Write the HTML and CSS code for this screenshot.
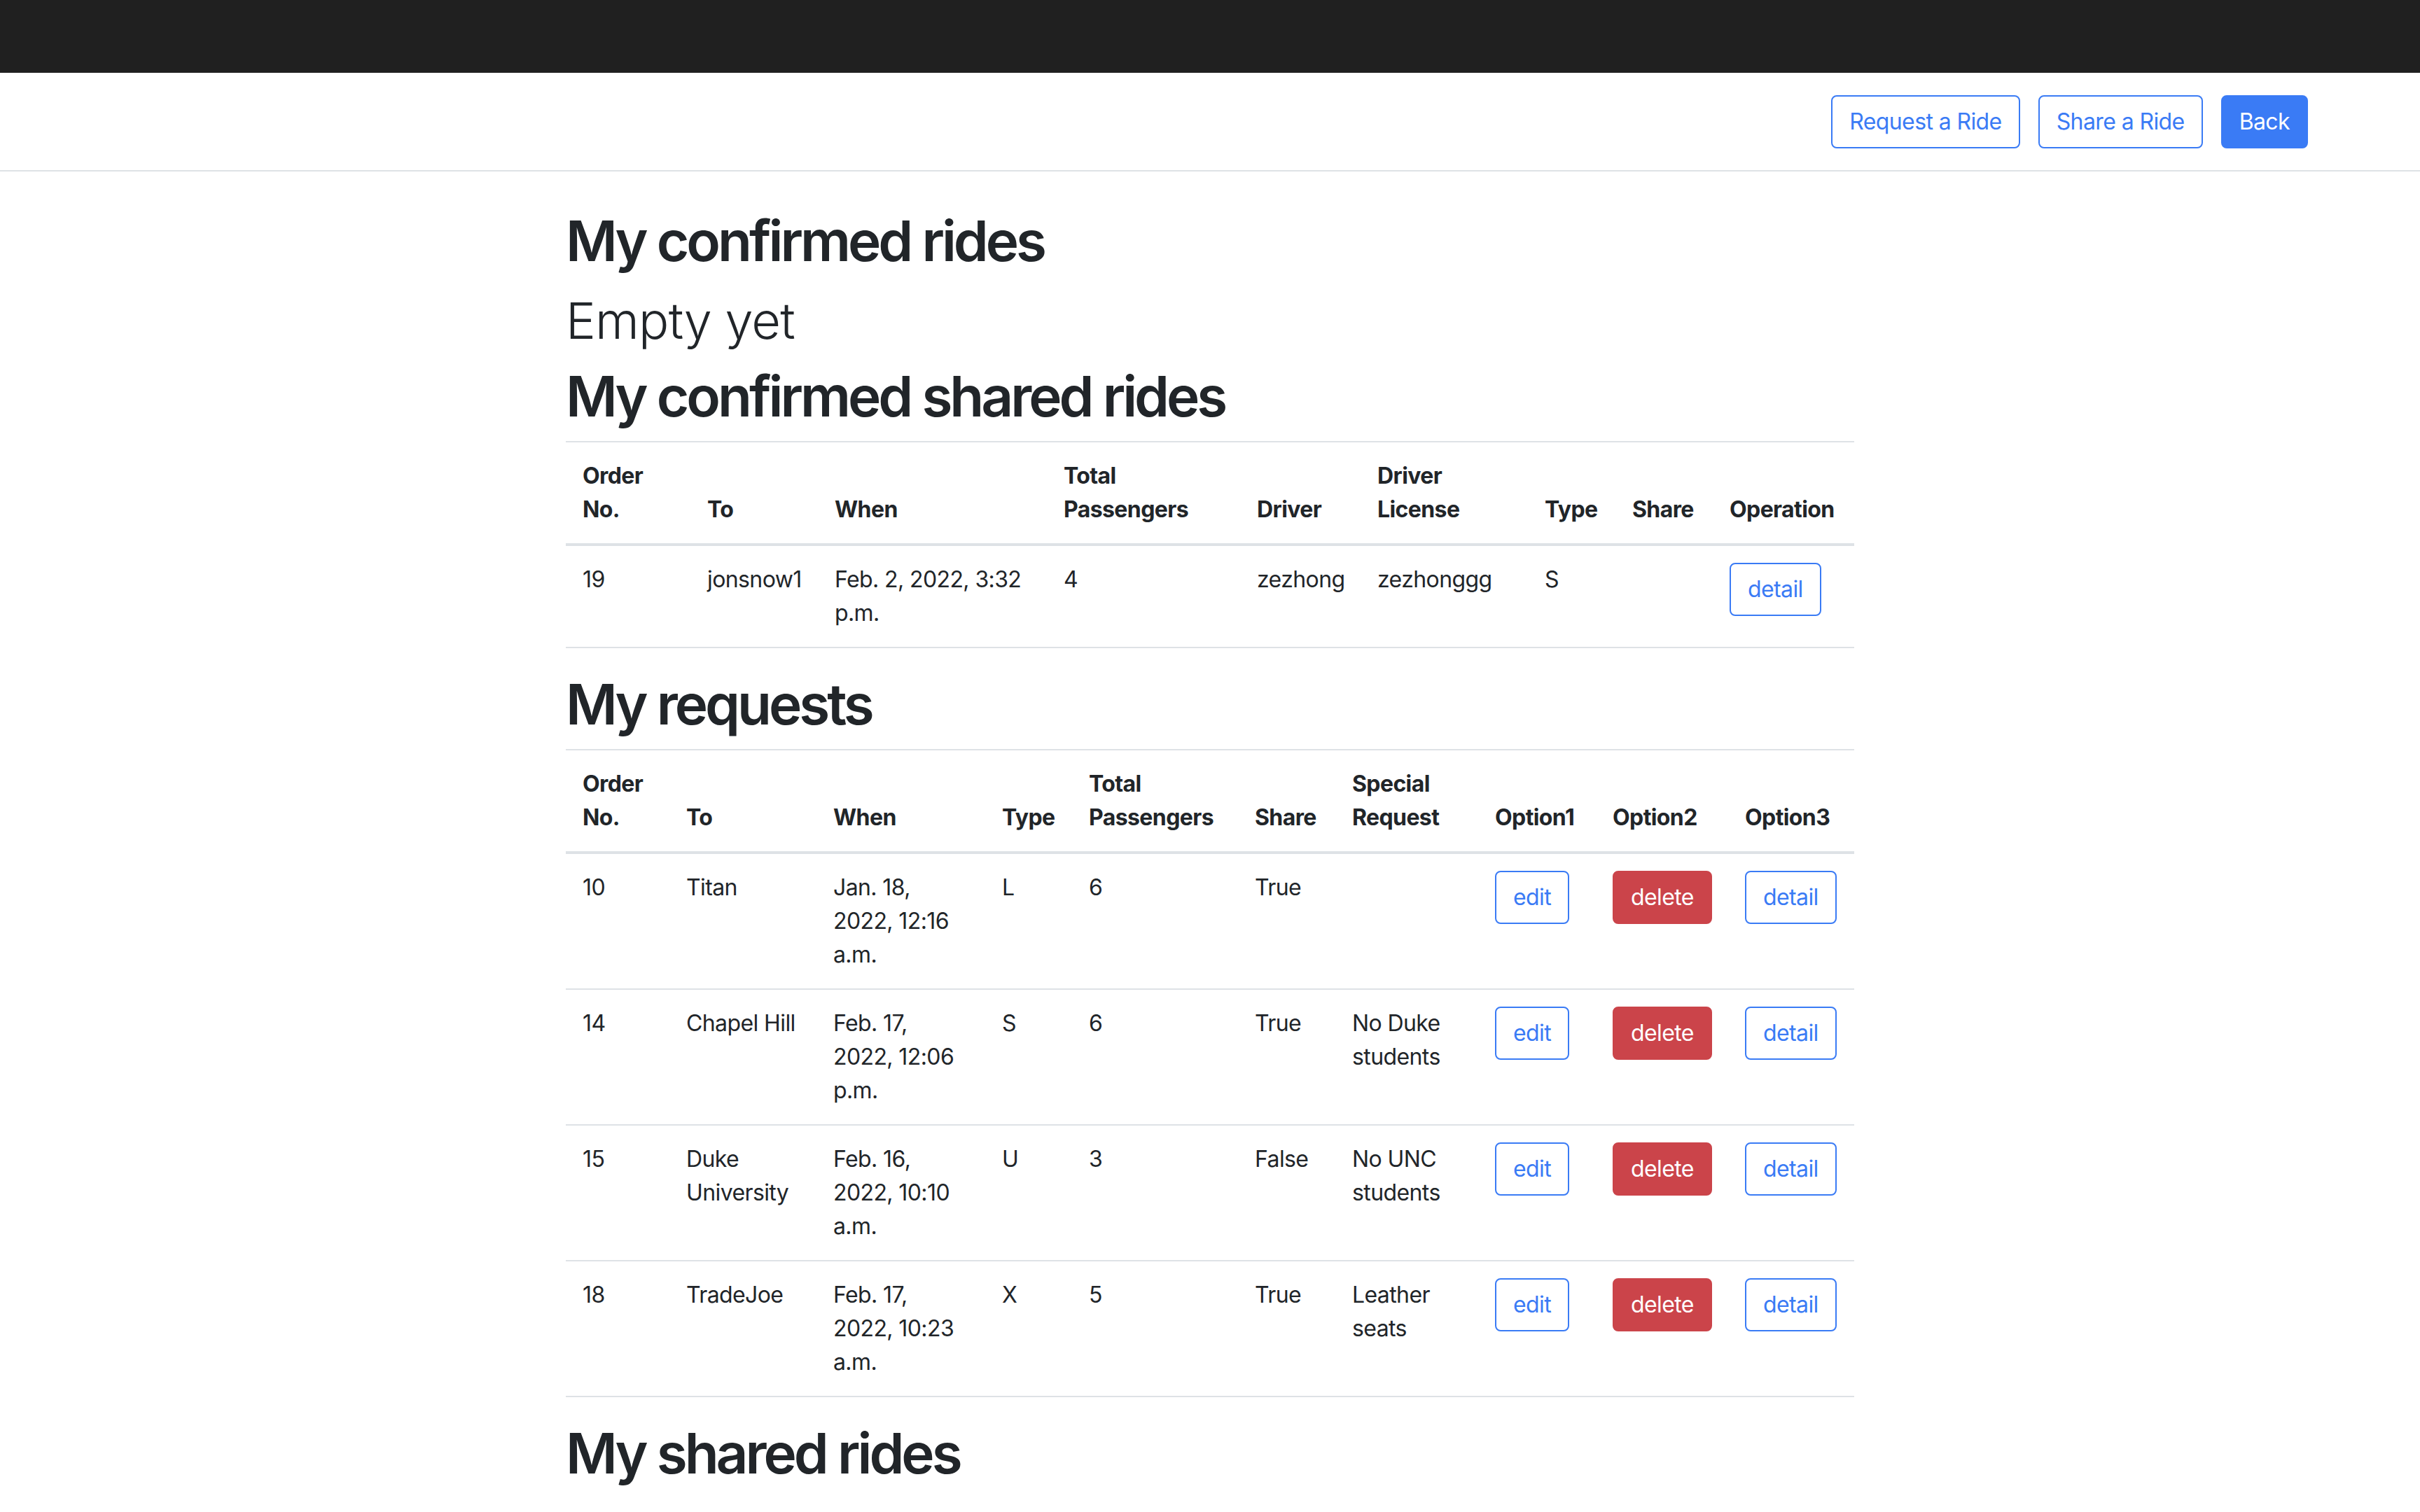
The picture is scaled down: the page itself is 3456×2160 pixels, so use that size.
FILE: index.html
```html
<!DOCTYPE html>
<html lang="en">
<head>
<meta charset="utf-8">
<title>My rides</title>
<link rel="stylesheet" href="styles.css">
</head>
<body>
<div class="topbar"></div>
<nav class="navbar">
  <div class="nav-actions">
    <a class="btn btn-outline" href="#">Request a Ride</a>
    <a class="btn btn-outline" href="#">Share a Ride</a>
    <a class="btn btn-primary" href="#">Back</a>
  </div>
</nav>
<main class="container">
  <h1 class="title">My confirmed rides</h1>
  <h2 class="empty">Empty yet</h2>
  <h1 class="title">My confirmed shared rides</h1>
  <table class="table">
    <colgroup>
      <col class="w178"><col class="w182"><col class="w327"><col class="w276"><col class="w172"><col class="w239"><col class="w125"><col class="w139"><col class="w202">
    </colgroup>
    <thead>
      <tr>
        <th>Order No.</th><th>To</th><th>When</th><th>Total Passengers</th><th>Driver</th><th>Driver License</th><th>Type</th><th>Share</th><th>Operation</th>
      </tr>
    </thead>
    <tbody>
      <tr>
        <td>19</td><td>jonsnow1</td><td>Feb. 2, 2022, 3:32 p.m.</td><td>4</td><td>zezhong</td><td>zezhonggg</td><td>S</td><td></td><td><a class="btn btn-outline" href="#">detail</a></td>
      </tr>
    </tbody>
  </table>
  <h1 class="title">My requests</h1>
  <table class="table">
    <colgroup>
      <col class="w148"><col class="w210"><col class="w241"><col class="w124"><col class="w237"><col class="w139"><col class="w204"><col class="w168"><col class="w189"><col class="w180">
    </colgroup>
    <thead>
      <tr>
        <th>Order No.</th><th>To</th><th>When</th><th>Type</th><th>Total Passengers</th><th>Share</th><th>Special Request</th><th>Option1</th><th>Option2</th><th>Option3</th>
      </tr>
    </thead>
    <tbody>
      <tr>
        <td>10</td><td>Titan</td><td>Jan. 18, 2022, 12:16 a.m.</td><td>L</td><td>6</td><td>True</td><td></td>
        <td><a class="btn btn-outline" href="#">edit</a></td><td><a class="btn btn-danger" href="#">delete</a></td><td><a class="btn btn-outline" href="#">detail</a></td>
      </tr>
      <tr>
        <td>14</td><td>Chapel Hill</td><td>Feb. 17, 2022, 12:06 p.m.</td><td>S</td><td>6</td><td>True</td><td>No Duke students</td>
        <td><a class="btn btn-outline" href="#">edit</a></td><td><a class="btn btn-danger" href="#">delete</a></td><td><a class="btn btn-outline" href="#">detail</a></td>
      </tr>
      <tr>
        <td>15</td><td>Duke University</td><td>Feb. 16, 2022, 10:10 a.m.</td><td>U</td><td>3</td><td>False</td><td>No UNC students</td>
        <td><a class="btn btn-outline" href="#">edit</a></td><td><a class="btn btn-danger" href="#">delete</a></td><td><a class="btn btn-outline" href="#">detail</a></td>
      </tr>
      <tr>
        <td>18</td><td>TradeJoe</td><td>Feb. 17, 2022, 10:23 a.m.</td><td>X</td><td>5</td><td>True</td><td>Leather seats</td>
        <td><a class="btn btn-outline" href="#">edit</a></td><td><a class="btn btn-danger" href="#">delete</a></td><td><a class="btn btn-outline" href="#">detail</a></td>
      </tr>
    </tbody>
  </table>
  <h1 class="title">My shared rides</h1>
</main>
</body>
</html>
```

FILE: styles.css
```css
html, body {
  margin: 0;
  padding: 0;
  background: #ffffff;
}

body {
  font-family: Inter, "Liberation Sans", "DejaVu Sans", sans-serif;
  font-size: 32px;
  line-height: 48px;
  letter-spacing: -0.6px;
  color: #212529;
}

.topbar {
  height: 104px;
  background: #202020;
}

.navbar {
  height: 139px;
  border-bottom: 2px solid #dee2e6;
  display: flex;
  align-items: center;
  justify-content: flex-end;
  padding-right: 160px;
}

.nav-actions {
  display: flex;
  gap: 26px;
}

.btn {
  display: inline-block;
  font-size: 32px;
  line-height: 48px;
  padding: 12px 24px;
  border: 2px solid transparent;
  border-radius: 8px;
  text-decoration: none;
  font-weight: 400;
  white-space: nowrap;
}

.btn-outline {
  color: #3a7bf5;
  border-color: #3a7bf5;
  background: #ffffff;
}

.btn-primary {
  color: #ffffff;
  background: #3a7bf5;
  border-color: #3a7bf5;
}

.btn-danger {
  color: #ffffff;
  background: #cb444a;
  border-color: #cb444a;
}

.container {
  width: 1840px;
  margin: 0 auto;
  padding-top: 51px;
}

.title {
  font-size: 80px;
  font-weight: 600;
  line-height: 96px;
  margin: 0 0 16px;
  letter-spacing: -4px;
}

.empty {
  font-size: 72px;
  font-weight: 300;
  line-height: 100px;
  margin: 0 0 10px;
  letter-spacing: -0.8px;
}

.table {
  width: 100%;
  table-layout: fixed;
  border-collapse: collapse;
  border-top: 2px solid #dee2e6;
  margin-bottom: 32px;
}

.table th,
.table td {
  padding: 24px;
  text-align: left;
  vertical-align: top;
}

.table thead th {
  vertical-align: bottom;
  font-weight: 700;
  border-bottom: 4px solid #dee2e6;
}

.table tbody td {
  border-bottom: 2px solid #dee2e6;
}

.w125 { width: 125px; }
.w139 { width: 139px; }
.w148 { width: 148px; }
.w168 { width: 168px; }
.w172 { width: 172px; }
.w178 { width: 178px; }
.w180 { width: 180px; }
.w182 { width: 182px; }
.w189 { width: 189px; }
.w202 { width: 202px; }
.w204 { width: 204px; }
.w210 { width: 210px; }
.w237 { width: 237px; }
.w239 { width: 239px; }
.w241 { width: 241px; }
.w276 { width: 276px; }
.w327 { width: 327px; }
```
